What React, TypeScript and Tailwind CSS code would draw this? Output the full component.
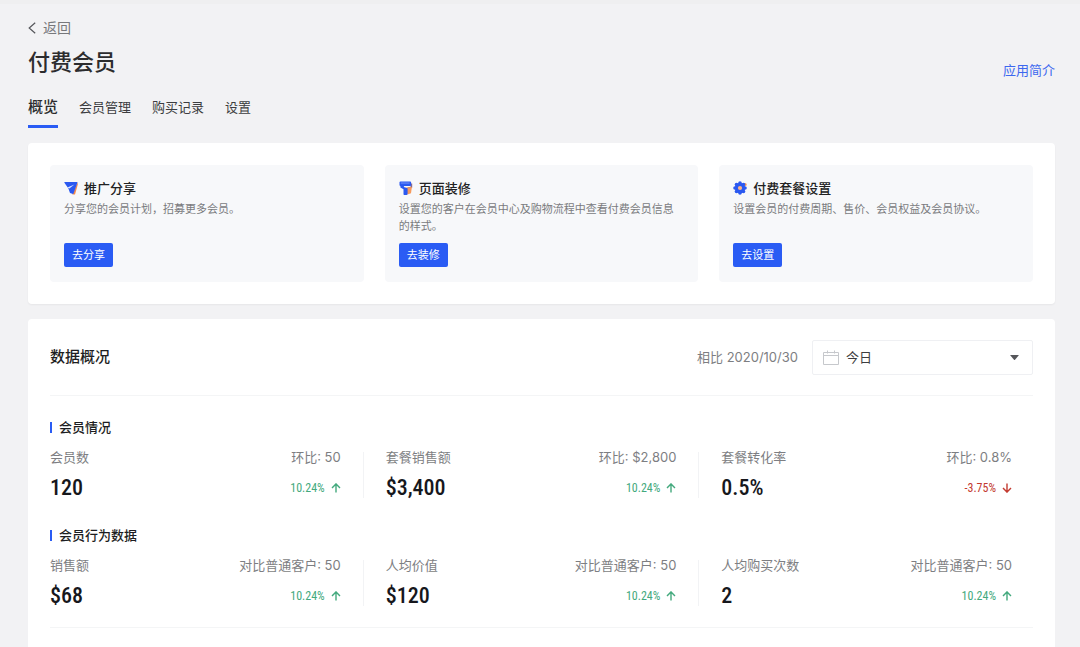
import { ReactNode } from "react";

type Metric = {
  label: string;
  value: string;
  compare: string;
  change: string;
  down?: boolean;
};

const memberMetrics: Metric[] = [
  { label: "会员数", value: "120", compare: "环比: 50", change: "10.24%" },
  { label: "套餐销售额", value: "$3,400", compare: "环比: $2,800", change: "10.24%" },
  { label: "套餐转化率", value: "0.5%", compare: "环比: 0.8%", change: "-3.75%", down: true },
];

const behaviorMetrics: Metric[] = [
  { label: "销售额", value: "$68", compare: "对比普通客户: 50", change: "10.24%" },
  { label: "人均价值", value: "$120", compare: "对比普通客户: 50", change: "10.24%" },
  { label: "人均购买次数", value: "2", compare: "对比普通客户: 50", change: "10.24%" },
];

const PlaneIcon = () => (
  <svg className="size-[14px]" viewBox="0 0 14 14" aria-hidden="true">
    <path d="M13.4 1.2 13.8 3.4 11 13.4H8.4z" fill="#f58a4b" />
    <path d="M.8 1h12.2q.7 0 .4.7L9.4 12.8q-.5.8-1 0L6 12 4.4 7.6.4 1.8Q0 1 .8 1z" fill="#2b59f0" />
    <path d="M3.4 6.4 10.4 3.4 5.4 7.4z" fill="#dfe7ff" />
  </svg>
);

const BrushIcon = () => (
  <svg className="size-[14px]" viewBox="0 0 14 14" aria-hidden="true">
    <path d="M11.6 2.6h1.6v4.2L8.4 8.2V6.6l3.2-.9z" fill="#8a6a8c" />
    <path d="M6 6.8 12.9 6 12 12.2l-3.4 1.4z" fill="#f79a5c" />
    <rect x=".5" y=".5" width="11.6" height="4.4" rx="1" fill="#2b59f0" />
    <path d="M1.8 1.6h8.8v.9H1.8z" fill="#7f9bfa" />
    <path d="M1.4 4.6h3l1 1.6 3.2 1v5.8c0 .5-.4.9-1 .9H5.5c-.6 0-1-.4-1-1V8.2L1.4 6.6z" fill="#2b59f0" />
  </svg>
);

const GearIcon = () => (
  <svg className="size-[14px]" viewBox="0 0 14 14" aria-hidden="true">
    <circle cx="12.2" cy="3.6" r="1.5" fill="#f79a5c" />
    <g fill="#2b59f0">
      <circle cx="7" cy="7" r="5.2" />
      <circle cx="7" cy="2" r="1.8" />
      <circle cx="10.5" cy="3.5" r="1.8" />
      <circle cx="12" cy="7" r="1.8" />
      <circle cx="10.5" cy="10.5" r="1.8" />
      <circle cx="7" cy="12" r="1.8" />
      <circle cx="3.5" cy="10.5" r="1.8" />
      <circle cx="2" cy="7" r="1.8" />
      <circle cx="3.5" cy="3.5" r="1.8" />
    </g>
    <circle cx="7" cy="7" r="2.1" fill="#fbb58a" />
  </svg>
);

const CalendarIcon = () => (
  <svg className="size-4" viewBox="0 0 16 16" fill="none" stroke="#c6c8cc" aria-hidden="true">
    <path d="M.5 2.5h15v12H.5zM.5 5.5h15M4.5.5v3M11.5.5v3" />
  </svg>
);

const Arrow = ({ down }: { down?: boolean }) => (
  <svg
    className={down ? "size-[10px] rotate-180" : "size-[10px]"}
    viewBox="0 0 10 10"
    fill="none"
    stroke="currentColor"
    strokeWidth="1.4"
    aria-hidden="true"
  >
    <path d="M5 9.6V1.2M1 4.9l4-4 4 4" />
  </svg>
);

type ActionCardProps = {
  icon: ReactNode;
  title: string;
  text: string;
  action: string;
};

const ActionCard = ({ icon, title, text, action }: ActionCardProps) => (
  <div className="flex flex-col items-start rounded-sm bg-[#f7f8fa] px-[14px] pt-[13px] pb-[15px]">
    <h2 className="flex items-center gap-[6px] text-[13px] leading-5 font-medium text-[#222]">
      {icon}
      {title}
    </h2>
    <p className="mt-[3px] min-h-[34px] text-[11px] leading-[17px] text-[#7a7b7e]">{text}</p>
    <button className="mt-2 h-6 rounded-xs bg-[#2a5cf4] px-2 text-[11px] text-white">
      {action}
    </button>
  </div>
);

const MetricCell = ({ metric }: { metric: Metric }) => (
  <div className="flex-1">
    <div className="flex justify-between text-[13px] leading-5 text-[#7d7e82]">
      <span>{metric.label}</span>
      <span>{metric.compare}</span>
    </div>
    <div className="mt-[7px] flex items-center justify-between font-['Roboto_Condensed',Roboto,sans-serif]">
      <span className="text-[22px] leading-7 font-medium text-[#16171c]">{metric.value}</span>
      <span
        className={
          metric.down
            ? "flex items-center gap-[6px] text-xs text-[#c33a30]"
            : "flex items-center gap-[6px] text-xs text-[#43a97d]"
        }
      >
        {metric.change}
        <Arrow down={metric.down} />
      </span>
    </div>
  </div>
);

const MetricGroup = ({ title, metrics }: { title: string; metrics: Metric[] }) => (
  <div>
    <h3 className="flex items-center gap-[7px] text-[13px] leading-5 font-medium text-[#1d1e22]">
      <span className="h-[11px] w-[2px] bg-[#2a5cf4]" />
      {title}
    </h3>
    <div className="mt-[10px] flex items-center gap-[22px] pr-[21px]">
      <MetricCell metric={metrics[0]} />
      <span className="h-[46px] w-px bg-[#f2f3f5]" />
      <MetricCell metric={metrics[1]} />
      <span className="h-[46px] w-px bg-[#f2f3f5]" />
      <MetricCell metric={metrics[2]} />
    </div>
  </div>
);

const App = () => {
  return (
    <div className="flex min-h-screen flex-col border-t-4 border-[#efeff0] bg-[#f2f2f4] pr-[25px] pl-7 font-[Inter,'Noto_Sans_CJK_SC',sans-serif]">
      <header className="pt-[14px]">
        <a href="#" className="flex h-5 w-fit items-center gap-[7px] text-sm text-[#77787b]">
          <svg className="h-3 w-2" viewBox="0 0 8 12" fill="none" stroke="#55565a" strokeWidth="1.2" aria-hidden="true">
            <path d="M7.2.8 1.2 6l6 5.2" />
          </svg>
          返回
        </a>
        <div className="mt-2 flex items-end justify-between">
          <h1 className="text-[22px] leading-8 font-medium text-[#2c2c2e]">付费会员</h1>
          <a href="#" className="text-[13px] leading-4 text-[#3d68ef]">
            应用简介
          </a>
        </div>
        <nav className="mt-[19px] flex items-start gap-[21px] text-[13px] leading-5 text-[#3c3d40]">
          <a href="#" className="border-b-3 border-[#2a5cf4] pb-2 text-[15px] font-medium text-[#2c2c2e]">
            概览
          </a>
          <a href="#">会员管理</a>
          <a href="#">购买记录</a>
          <a href="#">设置</a>
        </nav>
      </header>

      <section className="mt-[15px] grid grid-cols-3 gap-[21px] rounded-sm bg-white p-[22px] shadow-xs">
        <ActionCard
          icon={<PlaneIcon />}
          title="推广分享"
          text="分享您的会员计划，招募更多会员。"
          action="去分享"
        />
        <ActionCard
          icon={<BrushIcon />}
          title="页面装修"
          text="设置您的客户在会员中心及购物流程中查看付费会员信息的样式。"
          action="去装修"
        />
        <ActionCard
          icon={<GearIcon />}
          title="付费套餐设置"
          text="设置会员的付费周期、售价、会员权益及会员协议。"
          action="去设置"
        />
      </section>

      <section className="mt-[15px] flex-1 rounded-t-sm bg-white px-[22px] pt-[21px]">
        <div className="flex items-center">
          <h2 className="text-[15px] font-medium text-[#1d1e22]">数据概况</h2>
          <label htmlFor="range" className="mr-[14px] ml-auto text-[13px] text-[#7d7e82]">
            相比 2020/10/30
          </label>
          <div className="flex h-[35px] w-[221px] items-center gap-[7px] rounded-xs border border-[#eff0f3] pr-[13px] pl-[10px]">
            <CalendarIcon />
            <select id="range" className="flex-1 appearance-none bg-transparent text-[13px] text-[#3c3d40] outline-none">
              <option>今日</option>
            </select>
            <svg className="h-[5px] w-[9px]" viewBox="0 0 9 5" fill="#55565a" aria-hidden="true">
              <path d="M.6 0h7.8q.6 0 .2.5L5 4.7q-.5.5-1 0L.4.5Q0 0 .6 0z" />
            </svg>
          </div>
        </div>
        <div className="mt-5 flex flex-col gap-[23px] border-t border-b border-[#f4f5f6] pt-[21px] pb-[17px]">
          <MetricGroup title="会员情况" metrics={memberMetrics} />
          <MetricGroup title="会员行为数据" metrics={behaviorMetrics} />
        </div>
      </section>
    </div>
  );
};

export default App;
